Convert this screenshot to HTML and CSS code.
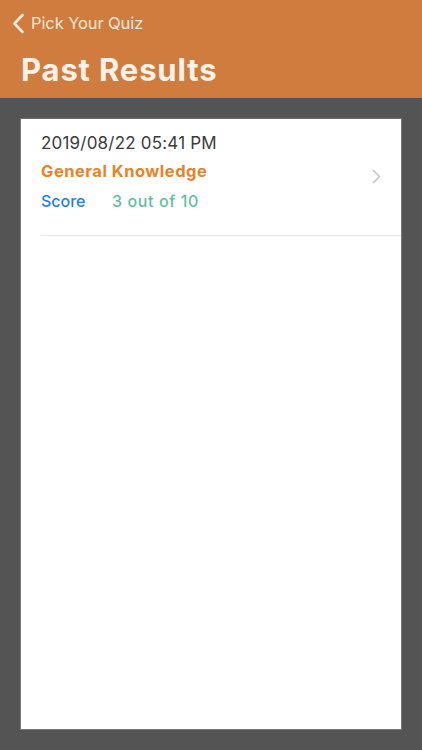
FILE: index.html
```html
<!DOCTYPE html>
<html>
<head>
<meta charset="utf-8">
<link rel="stylesheet" href="styles.css">
</head>
<body>
<header class="nav">
  <div class="back">
    <svg class="back-icon" width="13" height="21" viewBox="0 0 13 21"><path d="M10.5 2 L2.5 10.5 L10.5 19" fill="none" stroke="#f6e6d8" stroke-width="2.6" stroke-linecap="round" stroke-linejoin="round"/></svg>
    <span>Pick Your Quiz</span>
  </div>
  <h1 class="title">Past Results</h1>
</header>
<main class="content">
  <section class="card">
    <div class="row">
      <div class="row-text">
        <div class="date">2019/08/22 05:41 PM</div>
        <div class="quiz">General Knowledge</div>
        <div class="score"><span class="score-label">Score</span><span class="score-value">3 out of 10</span></div>
      </div>
      <svg class="chevron" width="9" height="15" viewBox="0 0 9 15"><path d="M1.5 1.5 L7.5 7.5 L1.5 13.5" fill="none" stroke="#c4c4c8" stroke-width="1.6" stroke-linecap="round" stroke-linejoin="round"/></svg>
    </div>
  </section>
</main>
</body>
</html>
```
FILE: styles.css
```css
html, body {
  margin: 0;
  padding: 0;
  height: 100%;
}
body {
  background: #545454;
  font-family: Inter, Roboto, "Noto Sans", sans-serif;
  width: 422px;
  height: 750px;
  overflow: hidden;
}
.nav {
  background: #cf7c3e;
  height: 98px;
  box-sizing: border-box;
  padding: 11px 0 0 12px;
}
.back {
  display: flex;
  align-items: center;
  gap: 6px;
  color: #f6e6d8;
  font-size: 16.5px;
  letter-spacing: -0.1px;
  height: 24px;
}
.back-icon {
  display: block;
}
.title {
  margin: 17px 0 0 9px;
  color: #fbf1e8;
  font-size: 31px;
  font-weight: 700;
  letter-spacing: 0.85px;
  line-height: 36px;
}
.content {
  padding: 20px 20px 0 20px;
}
.card {
  background: #fff;
  border: 1px solid #7a7a7a;
  border-top-color: #6e6e6e;
  height: 612px;
  box-sizing: border-box;
}
.row {
  margin-left: 20px;
  height: 116px;
  border-bottom: 1px solid #e6e6e8;
  display: flex;
  align-items: center;
  padding-right: 20px;
}
.row-text {
  flex: 1;
  padding-top: 2px;
  align-self: flex-start;
  margin-top: 11px;
}
.date {
  color: #3b3b3b;
  font-size: 17px;
  letter-spacing: 0.2px;
  line-height: 22px;
}
.quiz {
  margin-top: 7px;
  color: #e8832a;
  font-size: 16.5px;
  font-weight: 700;
  letter-spacing: 0.5px;
  line-height: 20px;
}
.score {
  margin-top: 10px;
  font-size: 16px;
  font-weight: 500;
  line-height: 20px;
  display: flex;
}
.score-label {
  color: #1e7fe3;
  width: 71px;
}
.score-value {
  color: #5fbf9f;
  letter-spacing: 0.6px;
}
.chevron {
  display: block;
  margin-top: -2px;
}
```
